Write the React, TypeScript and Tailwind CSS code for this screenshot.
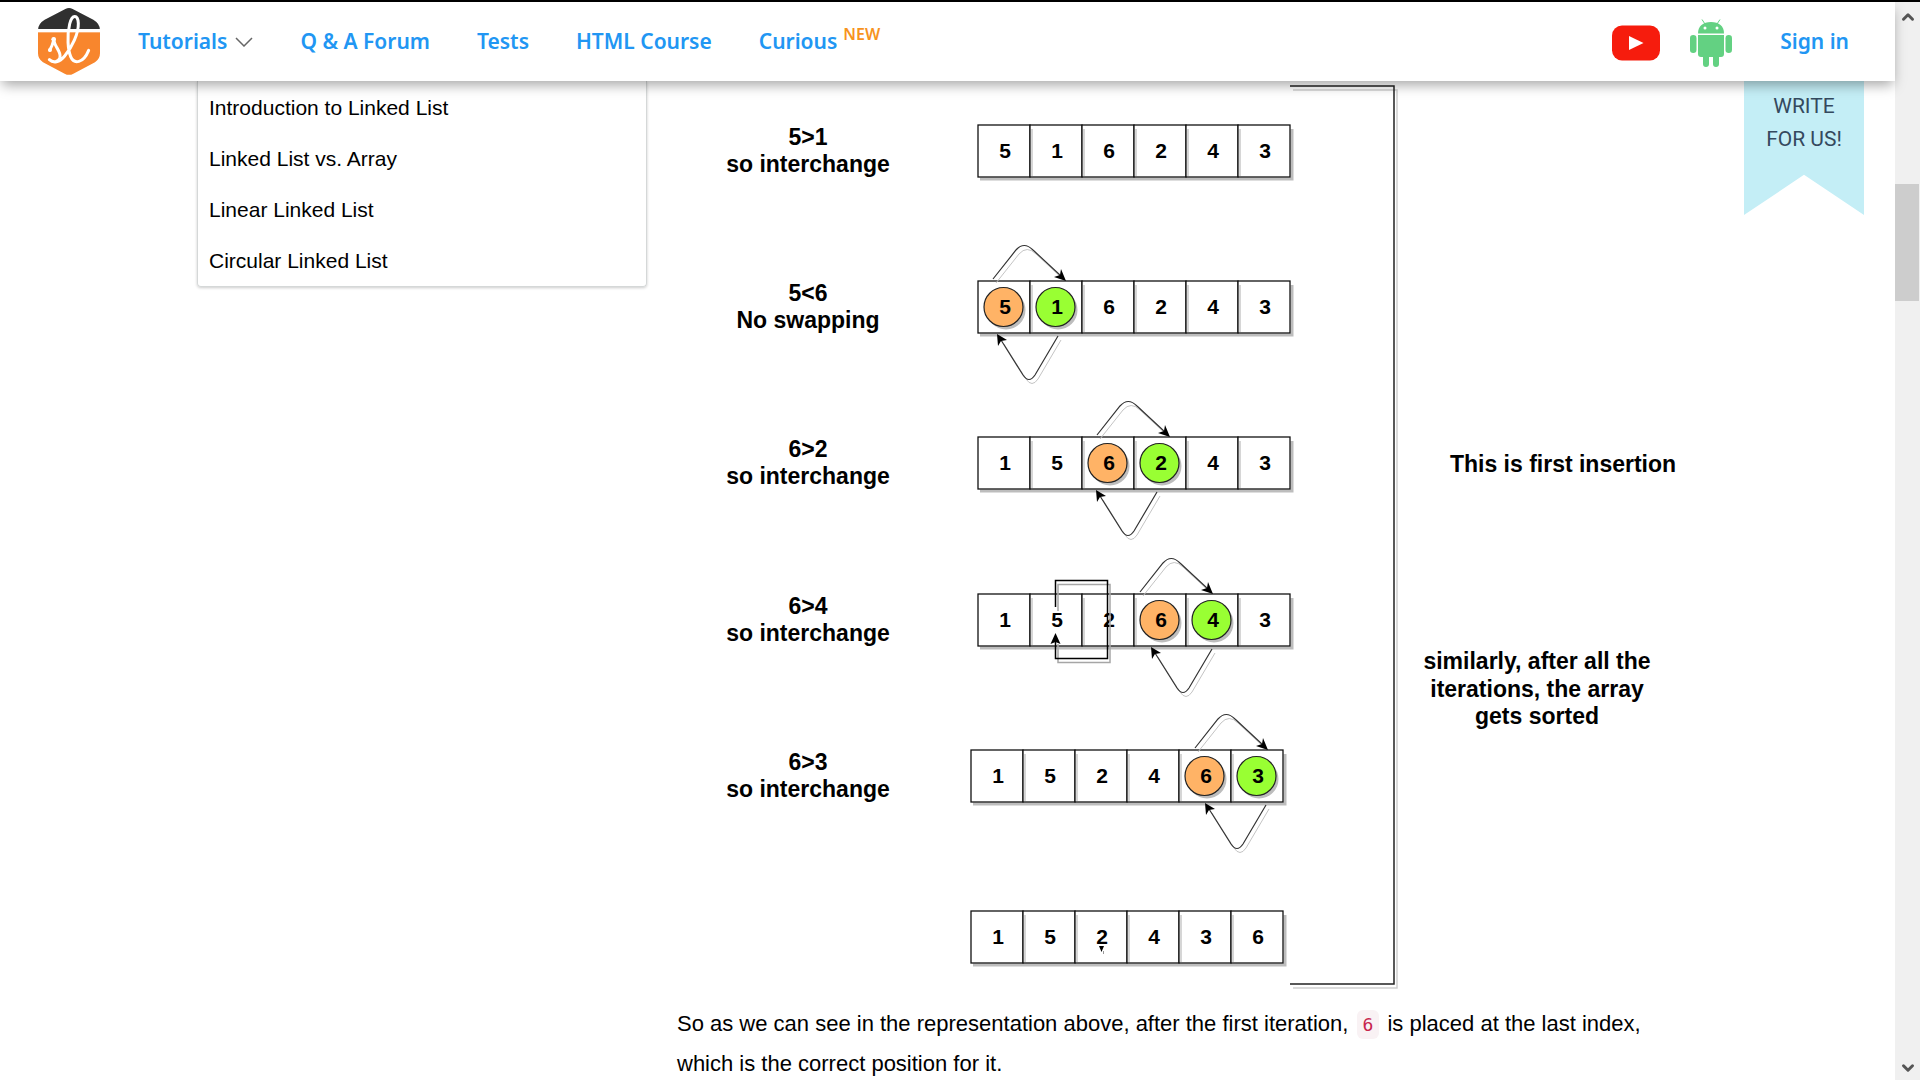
import React from "react";
import { ChevronDown, ChevronUp } from "lucide-react";

const sidebarItems = [
  "Introduction to Linked List",
  "Linked List vs. Array",
  "Linear Linked List",
  "Circular Linked List",
];

const CELL = 52;

type Step = {
  x: number;
  y: number;
  values: number[];
  label?: string[];
  swap?: number;
  over?: number;
  under?: number;
};

const steps: Step[] = [
  { x: 978, y: 125, values: [5, 1, 6, 2, 4, 3], label: ["5>1", "so interchange"] },
  { x: 978, y: 281, values: [5, 1, 6, 2, 4, 3], label: ["5<6", "No swapping"], swap: 0, over: 993, under: 1058 },
  { x: 978, y: 437, values: [1, 5, 6, 2, 4, 3], label: ["6>2", "so interchange"], swap: 2, over: 1097, under: 1157 },
  { x: 978, y: 594, values: [1, 5, 2, 6, 4, 3], label: ["6>4", "so interchange"], swap: 3, over: 1140, under: 1212 },
  { x: 971, y: 750, values: [1, 5, 2, 4, 6, 3], label: ["6>3", "so interchange"], swap: 4, over: 1195, under: 1266 },
  { x: 971, y: 911, values: [1, 5, 2, 4, 3, 6] },
];

function Logo() {
  return (
    <svg viewBox="114 24 186 201" className="h-[67px] w-[62px]" aria-label="Studytonight">
      <defs>
        <clipPath id="hex">
          <path d="M196 27 Q207 21 218 27 L280 59 Q300 71 300 90 V160 Q300 177 285 187 L220 221 Q207 228 194 221 L129 187 Q114 177 114 160 V90 Q114 71 134 59 Z" />
        </clipPath>
      </defs>
      <g clipPath="url(#hex)">
        <rect x="114" y="24" width="186" height="63" fill="#303030" />
        <rect x="114" y="97" width="186" height="130" fill="#f8862d" />
      </g>
      <path
        d="M149 151 Q157 138 162 117 C160 138 184 152 180 172 C176 188 158 188 148 179 C160 190 178 188 194 168 C216 142 236 100 235 70 C234 42 216 42 209 72 C200 108 204 150 212 170 C222 194 250 190 266 151"
        fill="none"
        stroke="#fff"
        strokeWidth="9"
        strokeLinecap="round"
        strokeLinejoin="round"
      />
      <circle cx="161" cy="118" r="7" fill="#fff" />
      <circle cx="150" cy="150" r="6" fill="#fff" />
    </svg>
  );
}

function YoutubeIcon() {
  return (
    <svg viewBox="0 0 48 36" className="h-9 w-12" aria-hidden="true">
      <rect width="48" height="35" y="0.5" rx="10" fill="#f61c0d" />
      <path d="M17 11 L31.500 18 L17 25 Z" fill="#fff" />
    </svg>
  );
}

function AndroidIcon() {
  return (
    <svg viewBox="0 0 42 48" className="h-12 w-[42px]" fill="#63d182" aria-hidden="true">
      <path d="M12 0.500 L15 5 M30 0.500 L27 5" stroke="#63d182" strokeWidth="1" />
      <path d="M8 14.500 C8 7 13 3 21 3 C29 3 34 7 34 14.500 Z" />
      <circle cx="15" cy="9" r="1.500" fill="#fff" />
      <circle cx="27" cy="9" r="1.500" fill="#fff" />
      <rect x="0" y="16" width="6.500" height="18" rx="3.200" />
      <rect x="35.500" y="16" width="6.500" height="18" rx="3.200" />
      <path d="M8 16 H34 V35 Q34 38 31 38 H29 V45 Q29 48 26 48 Q23 48 23 45 V38 H19 V45 Q19 48 16 48 Q13 48 13 45 V38 H11 Q8 38 8 35 Z" />
    </svg>
  );
}

function SwapArrows({ over, under, y }: { over: number; under: number; y: number }) {
  const top = `M${over} ${y - 2} L${over + 23} ${y - 31} Q${over + 31} ${y - 40} ${over + 40} ${y - 31} L${over + 68} ${y - 5}`;
  const bottom = `M${under} ${y + 55} L${under - 23} ${y + 94} Q${under - 29} ${y + 103} ${under - 35} ${y + 94} L${under - 57} ${y + 59}`;
  return (
    <g fill="none">
      <g stroke="#c4c4c4" transform="translate(3 4)">
        <path d={top} />
        <path d={bottom} />
      </g>
      <g stroke="#333" strokeWidth="1.200">
        <path d={top} />
        <path d={bottom} />
      </g>
      <path d={`M${over + 73} ${y} l-12 -4 l6 -2 l1 -6 Z`} fill="#000" />
      <path d={`M${under - 61} ${y + 53} l1 12 l3 -5 l6 -1 Z`} fill="#000" />
    </g>
  );
}

function StepRow({ step }: { step: Step }) {
  const { x, y, values, label, swap, over, under } = step;
  return (
    <g>
      <path d={`M${x + 2} ${y + 54} H${x + 314} V${y + 4}`} fill="none" stroke="#bdbdbd" strokeWidth="3" />
      {values.map((value, i) => {
        const cx = x + i * CELL + CELL / 2;
        const circled = swap !== undefined && (i === swap || i === swap + 1);
        return (
          <g key={i}>
            <rect x={x + i * CELL} y={y} width={CELL} height={CELL} fill="#fff" stroke="#111" strokeWidth="1.300" />
            {i > 0 && <path d={`M${x + i * CELL + 2} ${y + 4} v47`} stroke="#c8c8c8" strokeWidth="1.500" />}
            {circled && (
              <>
                <circle cx={cx + 2} cy={y + 29} r="19.500" fill="#bdbdbd" />
                <circle cx={cx - 0.5} cy={y + 26} r="19.500" fill={i === swap ? "#ffb366" : "#99ff33"} stroke="#222" strokeWidth="1.200" />
              </>
            )}
            <text x={cx + 1} y={y + 33} textAnchor="middle" className="text-[21px] font-bold">
              {value}
            </text>
          </g>
        );
      })}
      {label?.map((line, i) => (
        <text key={line} x="808" y={y + 20 + i * 27} textAnchor="middle" className="text-[23px] font-bold">
          {line}
        </text>
      ))}
      {over !== undefined && under !== undefined && <SwapArrows over={over} under={under} y={y} />}
    </g>
  );
}

function InsertionDiagram() {
  const bracket = "M1290 86 H1394 V984 H1290";
  const loop = "M1055.500 607 V580.500 H1107.500 V658.500 H1055.500 V640";
  return (
    <svg viewBox="677 81 1010 923" className="block w-full" fill="#000" role="img" aria-label="Insertion sort, first iteration">
      <path d={bracket} fill="none" stroke="#cfcfcf" strokeWidth="1.500" transform="translate(3 4)" />
      <path d={bracket} fill="none" stroke="#222" strokeWidth="1.500" />
      {steps.map((step) => (
        <StepRow key={step.y} step={step} />
      ))}
      <path d={loop} fill="none" stroke="#a6a6a6" strokeWidth="1.500" transform="translate(2.500 4)" />
      <path d={loop} fill="none" stroke="#000" strokeWidth="1.500" />
      <path d="M1055.500 633 l5 11 l-5 -2 l-5 2 Z" />
      <path d="M1099 946 h5 l-2.500 6 Z" />
      <path d="M1103.500 951 v3" stroke="#999" />
      <text x="1563" y="472" textAnchor="middle" className="text-[23px] font-bold">
        This is first insertion
      </text>
      <text textAnchor="middle" className="text-[23px] font-bold">
        <tspan x="1537" y="669">similarly, after all the</tspan>
        <tspan x="1537" y="697">iterations, the array</tspan>
        <tspan x="1537" y="724">gets sorted</tspan>
      </text>
    </svg>
  );
}

function Header() {
  return (
    <header className="relative z-10 flex h-[79px] shrink-0 items-center bg-white pr-[46px] pl-[38px] font-['Noto_Sans',sans-serif] text-[21px] font-semibold text-[#2196f3] shadow-[0_6px_12px_-2px_rgba(0,0,0,0.35)]">
      <a href="#home" aria-label="Home">
        <Logo />
      </a>
      <nav className="ml-[38px] flex items-center gap-[47px]">
        <button type="button" className="flex items-center gap-2">
          Tutorials
          <svg viewBox="0 0 18 10" className="h-[10px] w-[18px]" fill="none" stroke="#666" strokeWidth="1.500" aria-hidden="true">
            <path d="M1 1 L9 9 L17 1" />
          </svg>
        </button>
        <a href="#forum">Q &amp; A Forum</a>
        <a href="#tests">Tests</a>
        <a href="#html">HTML Course</a>
        <a href="#curious" className="flex gap-1.5">
          Curious
          <span className="text-[16px] leading-4 text-[#f7931e]">NEW</span>
        </a>
      </nav>
      <div className="ml-auto flex items-center">
        <a href="#youtube" aria-label="YouTube" className="mt-0.5">
          <YoutubeIcon />
        </a>
        <a href="#android" aria-label="Android app" className="mt-0.5 ml-[30px]">
          <AndroidIcon />
        </a>
        <a href="#signin" className="ml-12">
          Sign in
        </a>
      </div>
    </header>
  );
}

export default function App() {
  return (
    <div className="flex h-screen overflow-hidden border-t-2 border-black bg-white font-['Liberation_Sans',Arial,sans-serif] text-black">
      <div className="flex min-w-0 flex-1 flex-col">
        <Header />
        <div className="flex items-start pr-[31px] pl-[197px]">
          <aside className="w-[450px] shrink-0 rounded-b border border-t-0 border-[#d5d8d8] pt-px shadow-[0_1px_3px_rgba(0,0,0,0.2)]">
            <ul className="text-[21px] leading-[51px]">
              {sidebarItems.map((item) => (
                <li key={item}>
                  <a href="#topic" className="block px-[11px]">
                    {item}
                  </a>
                </li>
              ))}
            </ul>
          </aside>
          <main className="ml-[30px] min-w-0 flex-1">
            <InsertionDiagram />
            <p className="text-[22px] leading-[39px]">
              So as we can see in the representation above, after the first iteration,{" "}
              <code className="mx-0.5 rounded-md bg-[#f9f2f4] px-1.5 py-1 font-['DejaVu_Sans_Mono',monospace] text-[18px] text-[#c7254e]">6</code>{" "}
              is placed at the last index, which is the correct position for it.
            </p>
          </main>
          <a
            href="#write"
            className="ml-[57px] block h-[134px] w-[120px] shrink-0 bg-[#c4eef6] pt-[9px] text-center font-['Roboto',sans-serif] text-[21px] leading-[33px] text-[#34495e] [clip-path:polygon(0_0,100%_0,100%_100%,50%_70%,0_100%)]"
          >
            WRITE
            <br />
            FOR US!
          </a>
        </div>
      </div>
      <div className="flex w-[25px] shrink-0 flex-col items-center bg-[#f0f0f0] text-[#555]">
        <ChevronUp className="mt-1.5 h-[18px] w-[18px] shrink-0" strokeWidth={4} />
        <div className="mt-[158px] mr-px h-[117px] w-6 shrink-0 bg-[#cdcdcd]" />
        <ChevronDown className="mt-auto mb-[3px] h-[18px] w-[18px] shrink-0" strokeWidth={4} />
      </div>
    </div>
  );
}
